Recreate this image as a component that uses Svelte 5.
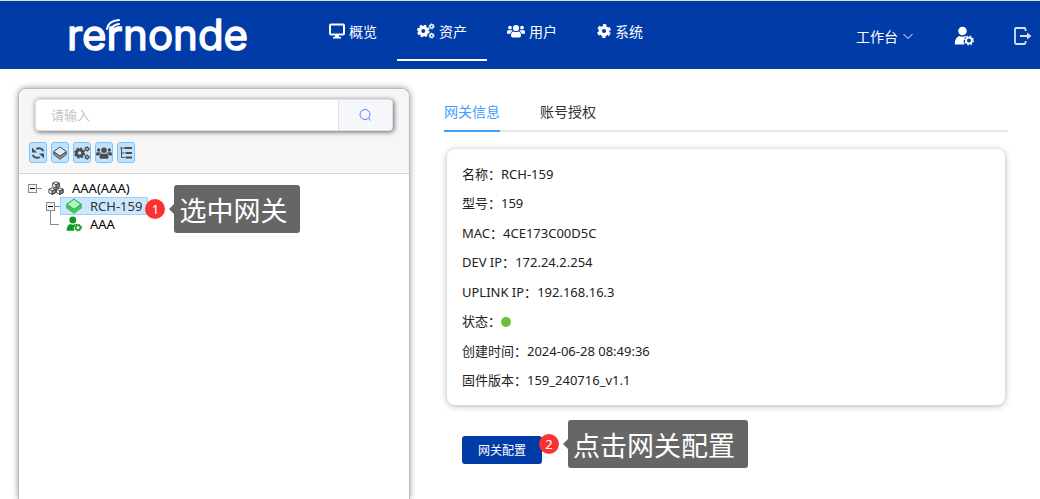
<script>
    let keyword = $state('');
    let currentTab = $state('info');

    const menus = [
        { name: '概览', icon: 'monitor', width: 16 },
        { name: '资产', icon: 'gears', width: 18, active: true },
        { name: '用户', icon: 'users', width: 18 },
        { name: '系统', icon: 'gear', width: 14 }
    ];

    const tools = [
        { name: '刷新', icon: 'refresh', width: 14 },
        { name: '网关', icon: 'box', width: 14 },
        { name: '设备', icon: 'gears', width: 16 },
        { name: '用户', icon: 'users', width: 16 },
        { name: '展开', icon: 'list', width: 14 }
    ];

    const tabs = [
        { id: 'info', name: '网关信息' },
        { id: 'auth', name: '账号授权' }
    ];

    const details = [
        { label: '名称', value: 'RCH-159' },
        { label: '型号', value: '159' },
        { label: 'MAC', value: '4CE173C00D5C' },
        { label: 'DEV IP', value: '172.24.2.254' },
        { label: 'UPLINK IP', value: '192.168.16.3' },
        { label: '状态', online: true },
        { label: '创建时间', value: '2024-06-28 08:49:36' },
        { label: '固件版本', value: '159_240716_v1.1' }
    ];
</script>

{#snippet icon(name, width)}
    {#if name === 'monitor'}
        <svg {width} height="16" viewBox="0 0 16 16" aria-hidden="true">
            <rect x="1" y="1.5" width="14" height="10" rx="1" fill="none" stroke="currentColor" stroke-width="2" />
            <path d="M6.3 12h3.4l.6 2H12v1.4H4V14h1.7z" fill="currentColor" />
        </svg>
    {:else if name === 'gears'}
        <svg {width} height="16" viewBox="0 0 18 16" fill="none" stroke="currentColor" aria-hidden="true">
            <circle cx="6.3" cy="8" r="3.6" stroke-width="3.2" />
            <circle cx="6.3" cy="8" r="5.3" stroke-width="2" stroke-dasharray="2.4 1.76" />
            <circle cx="14.6" cy="3.4" r="1.7" stroke-width="1.5" />
            <circle cx="14.6" cy="3.4" r="2.6" stroke-width="1" stroke-dasharray="1.2 1.52" />
            <circle cx="14.6" cy="12.6" r="1.7" stroke-width="1.5" />
            <circle cx="14.6" cy="12.6" r="2.6" stroke-width="1" stroke-dasharray="1.2 1.52" />
        </svg>
    {:else if name === 'users'}
        <svg {width} height="16" viewBox="0 0 18 16" fill="currentColor" aria-hidden="true">
            <circle cx="9" cy="5" r="3.1" />
            <circle cx="3" cy="4.6" r="1.9" />
            <circle cx="15" cy="4.6" r="1.9" />
            <path d="M4 12.8C4 10 5 8.4 6.6 8.4q2.4 1.3 4.8 0C13 8.4 14 10 14 12.8q0 1.7-1.5 1.7h-7Q4 14.5 4 12.8z" />
            <path d="M0 10.2C0 8.2.6 7 1.5 7q1.5.9 3 0 .6 0 1 .5Q4.3 8.5 3.6 10.8H.8q-.8 0-.8-.6zM18 10.2C18 8.2 17.4 7 16.5 7q-1.5.9-3 0-.6 0-1 .5 1.2 1 1.9 3.3h2.8q.8 0 .8-.6z" />
        </svg>
    {:else if name === 'gear'}
        <svg {width} height="16" viewBox="0 0 14 16" fill="none" stroke="currentColor" aria-hidden="true">
            <circle cx="7" cy="8" r="3.7" stroke-width="3.2" />
            <circle cx="7" cy="8" r="5.7" stroke-width="2.4" stroke-dasharray="3.4 2.57" stroke-dashoffset="-1.28" />
        </svg>
    {:else if name === 'refresh'}
        <svg {width} height="14" viewBox="0 0 14 14" fill="none" stroke="currentColor" stroke-width="2" aria-hidden="true">
            <path d="M12.4 5.2C11.2 2.6 8 1.6 5.2 2.8M1.6 8.8c1.2 2.6 4.4 3.6 7.2 2.4" />
            <path d="M1 1.6v5h5zM13 12.4v-5H8z" fill="currentColor" stroke="none" />
        </svg>
    {:else if name === 'box'}
        <svg class="box" {width} height={width} viewBox="0 0 14 14" stroke="currentColor" stroke-linejoin="round" aria-hidden="true">
            <path class="box-side" d="M.7 5.8v2.7L7 13.2l6.3-4.7V5.8L7 10.3z" />
            <path class="box-top" d="M7 1 13.3 5.5 7 10 .7 5.5z" />
        </svg>
    {:else if name === 'list'}
        <svg {width} height="14" viewBox="0 0 14 14" aria-hidden="true">
            <path d="M1 2h4M2.5 2v9.5h3M2.5 7h3" fill="none" stroke="currentColor" />
            <path d="M5.5 1H13v2H5.5zM6.5 6H13v2H6.5zM6.5 10.5H13v2H6.5z" fill="currentColor" />
        </svg>
    {:else if name === 'cubes'}
        <svg {width} height="14" viewBox="0 0 16 14" fill="none" stroke="currentColor" stroke-linejoin="round" aria-hidden="true">
            {#each [[8, 0.7], [4.2, 6.8], [11.8, 6.8]] as [x, y]}
                <g transform="translate({x} {y})">
                    <path d="M0 3v3.5L3.3 5V1.5z" fill="currentColor" fill-opacity=".6" />
                    <path d="M0 0l3.3 1.5V5L0 6.5-3.3 5V1.5zM-3.3 1.5 0 3l3.3-1.5M0 3v3.5" />
                </g>
            {/each}
        </svg>
    {:else if name === 'userGear'}
        <svg {width} height={width} viewBox="0 0 20 20" aria-hidden="true">
            <circle cx="8.5" cy="5" r="4.3" fill="currentColor" />
            <path d="M.8 18.5c0-5 1.7-7.6 4.7-8.5q3 1.6 6 0l1 .5c-2.8 1.8-3.6 5-2 8z" fill="currentColor" />
            <circle cx="15" cy="14.5" r="2.9" fill="none" stroke="currentColor" stroke-width="1.8" />
            <circle cx="15" cy="14.5" r="4.2" fill="none" stroke="currentColor" stroke-width="1.5" stroke-dasharray="1.7 1.6" />
        </svg>
    {/if}
{/snippet}

<div class="page">
    <header>
        <a class="logo" href="#home" aria-label="rernonde">
            <svg width="200" height="64" viewBox="0 0 200 64">
                <text x="1" y="49">rernonde</text>
                <path d="M41 28q1-8 12-9M45 29q1-5 8-6" />
            </svg>
        </a>
        <nav>
            {#each menus as menu}
                <a class="menu-item" class:active={menu.active} href="#menu">
                    {@render icon(menu.icon, menu.width)}
                    <span>{menu.name}</span>
                </a>
            {/each}
        </nav>
        <div class="header-right">
            <button class="workbench">
                工作台
                <svg width="12" height="12" viewBox="0 0 12 12" fill="none" stroke="currentColor" aria-hidden="true">
                    <path d="M1.5 4 6 8.5 10.5 4" />
                </svg>
            </button>
            <button class="icon-btn" aria-label="账号">{@render icon('userGear', 20)}</button>
            <button class="icon-btn exit" aria-label="退出">
                <svg width="18" height="20" viewBox="0 0 18 20" fill="none" stroke="currentColor" stroke-width="1.8" aria-hidden="true">
                    <path d="M11.5 5V3.2Q11.5 2 10.3 2H2.2Q1 2 1 3.2v13.6Q1 18 2.2 18h8.1q1.2 0 1.2-1.2V15M6 10h8" />
                    <path d="M13 6.5 17.5 10 13 13.5z" fill="currentColor" stroke="none" />
                </svg>
            </button>
        </div>
    </header>

    <main>
        <aside>
            <div class="panel-head">
                <div class="search">
                    <input type="text" placeholder="请输入" aria-label="搜索" bind:value={keyword} />
                    <button aria-label="搜索">
                        <svg width="14" height="14" viewBox="0 0 14 14" fill="none" stroke="currentColor" aria-hidden="true">
                            <circle cx="7" cy="6.5" r="5" />
                            <path d="M10.5 10l2 2.5" />
                        </svg>
                    </button>
                </div>
                <div class="tools">
                    {#each tools as tool}
                        <button aria-label={tool.name}>{@render icon(tool.icon, tool.width)}</button>
                    {/each}
                </div>
            </div>

            <ul class="tree">
                <li>
                    <div class="node">
                        <button class="switch" aria-label="收起"></button>
                        <a href="#root"><span class="node-icon">{@render icon('cubes', 16)}</span>AAA(AAA)</a>
                    </div>
                    <ul>
                        <li>
                            <div class="node">
                                <button class="switch" aria-label="收起"></button>
                                <a class="selected" href="#gateway">
                                    <span class="node-icon green">{@render icon('box', 16)}</span>RCH-159
                                </a>
                                <div class="hint">
                                    <span class="badge">1</span>
                                    <span class="callout">选中网关</span>
                                </div>
                            </div>
                        </li>
                        <li>
                            <div class="node">
                                <span class="branch"></span>
                                <a href="#user"><span class="node-icon green">{@render icon('userGear', 16)}</span>AAA</a>
                            </div>
                        </li>
                    </ul>
                </li>
            </ul>
        </aside>

        <section>
            <div class="tabs" role="tablist">
                {#each tabs as tab}
                    <button
                        role="tab"
                        aria-selected={currentTab === tab.id}
                        class:active={currentTab === tab.id}
                        onclick={() => (currentTab = tab.id)}>{tab.name}</button>
                {/each}
            </div>

            <div class="card">
                {#each details as item}
                    <p>{item.label}：{#if item.online}<i class="dot"></i>{:else}{item.value}{/if}</p>
                {/each}
            </div>

            <div class="actions">
                <button class="config">网关配置</button>
                <div class="hint">
                    <span class="badge">2</span>
                    <span class="callout">点击网关配置</span>
                </div>
            </div>
        </section>
    </main>
</div>

<style>
    :global(body) {
        background: #fff;
        font-family: "Noto Sans", "Noto Sans CJK SC", sans-serif;
        font-size: 13px;
        color: #222;
    }

    .page {
        height: 100vh;
        display: flex;
        flex-direction: column;
        overflow: hidden;
    }

    button {
        font-family: inherit;
        border: none;
        padding: 0;
        background: none;
        color: inherit;
        cursor: pointer;
    }

    a {
        color: inherit;
        text-decoration: none;
    }

    svg {
        display: block;
        flex: none;
    }

    header {
        box-sizing: border-box;
        height: 69px;
        flex: none;
        display: flex;
        padding: 0 8px 0 66px;
        background: #003ba7;
        border-top: 1px solid #dcdfe0;
        color: #fff;
    }

    .logo {
        width: 243px;
    }

    .logo text {
        font-family: Inter, sans-serif;
        font-size: 42px;
        font-weight: 400;
        fill: #fff;
        stroke: #fff;
        stroke-width: 1.4;
        stroke-linejoin: round;
    }

    .logo path {
        fill: none;
        stroke: #fff;
        stroke-width: 2;
        stroke-linecap: round;
    }

    nav {
        display: flex;
    }

    .menu-item {
        box-sizing: border-box;
        display: flex;
        align-items: center;
        gap: 4px;
        height: 60px;
        padding: 2px 20px 0;
        border-bottom: 2px solid transparent;
        font-size: 14px;
    }

    .menu-item.active {
        border-color: #fff;
    }

    .header-right {
        display: flex;
        align-items: center;
        margin-left: auto;
        padding-top: 2px;
    }

    .workbench {
        display: flex;
        align-items: center;
        gap: 4px;
        font-size: 14px;
    }

    .icon-btn {
        margin-left: 40px;
    }

    .exit {
        opacity: .85;
    }

    main {
        flex: 1;
        min-height: 0;
        display: grid;
        grid-template-columns: 41fr 59fr;
        gap: 34px;
        padding: 19px 32px 0 18px;
    }

    aside {
        border: 1px solid #bbb;
        border-bottom: none;
        border-radius: 8px 8px 0 0;
        box-shadow: 0 0 6px rgba(0, 0, 0, .4);
    }

    .panel-head {
        padding: 10px 16px;
        background: #f6f6f6;
        border-bottom: 1px solid #d4d4d4;
        border-radius: 8px 8px 0 0;
    }

    .search {
        box-sizing: border-box;
        height: 32px;
        display: flex;
        border: 1px solid #dcdfe6;
        border-radius: 4px;
        background: #fff;
        box-shadow: 1px 1px 5px rgba(0, 0, 0, .6);
        overflow: hidden;
    }

    .search input {
        flex: 1;
        min-width: 0;
        border: none;
        outline: none;
        padding: 0 15px;
        background: none;
        font-family: inherit;
        font-size: 13px;
    }

    .search input::placeholder {
        color: #c0c4cc;
    }

    .search button {
        width: 54px;
        display: flex;
        align-items: center;
        justify-content: center;
        background: #f5f7fa;
        border-left: 1px solid #dcdfe6;
        color: #4a84f5;
    }

    .tools {
        display: flex;
        gap: 4px;
        margin: 11px 0 0 -6px;
    }

    .tools button {
        box-sizing: border-box;
        width: 18px;
        height: 21px;
        display: flex;
        align-items: center;
        justify-content: center;
        background: #bfe3ff;
        border: 1px solid #7cc4fa;
        border-radius: 3px;
        color: #4d4d4d;
    }

    .box-top {
        fill: #d9ecfb;
    }

    .box-side {
        fill: #9a9a9a;
    }

    ul {
        list-style: none;
        margin: 0;
        padding: 0;
    }

    .tree {
        padding: 5px 8px;
        color: #000;
    }

    .tree ul {
        padding-left: 18px;
    }

    .node {
        position: relative;
        display: flex;
        height: 18px;
    }

    .node a {
        box-sizing: border-box;
        display: flex;
        align-items: center;
        height: 18px;
        padding: 0 5px;
        border: 1px solid transparent;
        font-size: 13px;
        line-height: 16px;
    }

    .node a.selected {
        background: #cce8ff;
        border-color: #99d1ff;
        color: #333;
    }

    .node-icon {
        width: 16px;
        margin-right: 8px;
        color: #4d4d4d;
    }

    .green {
        color: #12991f;
    }

    .green .box {
        color: #35b94a;
    }

    .green .box-top {
        fill: #b4f3c2;
    }

    .green .box-side {
        fill: #4fc963;
    }

    /* expand toggle with its connector */
    .switch,
    .branch {
        position: relative;
        width: 15px;
        height: 18px;
    }

    .switch::before {
        content: "";
        position: absolute;
        left: 1px;
        top: 5px;
        width: 7px;
        height: 7px;
        border: 1px solid #8a8a8a;
        background: linear-gradient(#000, #000) center / 5px 1px no-repeat #f3f3f3;
    }

    .switch::after {
        content: "";
        position: absolute;
        left: 10px;
        top: 9px;
        width: 5px;
        border-top: 1px solid #888;
    }

    .branch::before {
        content: "";
        position: absolute;
        left: 5px;
        top: -5px;
        width: 8px;
        height: 14px;
        border: solid #888;
        border-width: 0 0 1px 1px;
    }

    /* numbered step marker and its label */
    .hint {
        position: relative;
        width: 0;
    }

    .badge {
        position: absolute;
        left: -3px;
        top: 2px;
        width: 20px;
        height: 20px;
        border-radius: 50%;
        background: #fb3232;
        color: #fff;
        font-size: 13px;
        line-height: 20px;
        text-align: center;
    }

    .callout {
        position: absolute;
        left: 26px;
        top: -12px;
        z-index: 1;
        height: 48px;
        padding: 0 13px 0 5px;
        border-radius: 3px;
        background: #666;
        color: #fff;
        font-size: 27px;
        line-height: 52px;
        white-space: nowrap;
    }

    .callout::before {
        content: "";
        position: absolute;
        left: -5px;
        top: 19px;
        border: solid transparent;
        border-width: 5px 5px 5px 0;
        border-right-color: #666;
    }

    .tabs {
        display: flex;
        gap: 40px;
        margin-top: 4px;
        border-bottom: 2px solid #e4e7ed;
    }

    .tabs button {
        height: 40px;
        margin-bottom: -2px;
        border-bottom: 2px solid transparent;
        font-size: 14px;
        color: #303133;
    }

    .tabs button.active {
        color: #409eff;
        border-color: #409eff;
    }

    .card {
        display: grid;
        grid-auto-rows: 1fr;
        align-items: center;
        min-height: 236px;
        margin: 17px 3px 0;
        padding: 10px 15px;
        border-radius: 8px;
        box-shadow: 0 1px 6px rgba(0, 0, 0, .3);
    }

    .card p {
        margin: 0;
        line-height: 20px;
    }

    .dot {
        display: inline-block;
        width: 10px;
        height: 10px;
        border-radius: 50%;
        background: #67c23a;
        vertical-align: -1px;
    }

    .actions {
        display: flex;
        margin: 31px 18px;
    }

    .actions .hint {
        top: -4px;
    }

    .config {
        width: 80px;
        height: 28px;
        border-radius: 3px;
        background: #003ba7;
        color: #fff;
        font-size: 12px;
    }
</style>
